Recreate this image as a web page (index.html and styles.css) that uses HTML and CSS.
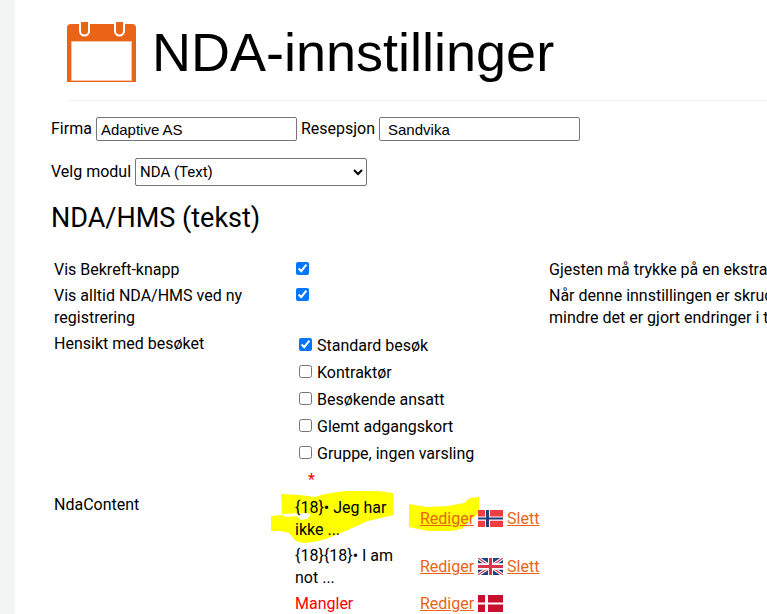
FILE: index.html
```html
<!DOCTYPE html>
<html lang="no">
  <head>
    <meta charset="utf-8"/>
    <meta name="viewport" content="width=device-width, initial-scale=1"/>
    <title>NDA-innstillinger</title>
    <link rel="stylesheet" href="styles.css">
  </head>
  <body>
    <main class="page">
      <header class="page__header">
        <svg class="page__icon" viewBox="0 0 69 60" aria-hidden="true">
          <path fill="#ea6418" d="M0 60V6q0-4 4-4h61q4 0 4 4v54z"/>
          <path fill="#fff" stroke="#f8c4a5" d="M4.500 19.500h60v39h-60z"/>
          <path fill="#fff" d="M12 0h11v9a5.500 5.500 0 0 1-11 0zM47 0h11v9a5.500 5.500 0 0 1-11 0z"/>
          <path fill="#ea6418" d="M14 0h7v9a3.500 3.500 0 0 1-7 0zM49 0h7v9a3.500 3.500 0 0 1-7 0z"/>
        </svg>
        <h1 class="page__title">NDA-innstillinger</h1>
      </header>

      <div class="filters">
        <label for="company">Firma</label>
        <input class="filters__input" type="text" id="company" value="Adaptive AS">
        <label for="reception">Resepsjon</label>
        <input class="filters__input filters__input--indent" type="text" id="reception" value="Sandvika">
      </div>
      <div class="filters">
        <label for="module">Velg modul</label>
        <select class="filters__select" id="module">
          <option>NDA (Text)</option>
        </select>
      </div>

      <h2 class="section-title">NDA/HMS (tekst)</h2>

      <table class="settings">
        <tr>
          <td class="settings__name"><label for="confirm">Vis Bekreft-knapp</label></td>
          <td class="settings__value"><input class="check" type="checkbox" id="confirm" checked></td>
          <td class="settings__help">Gjesten må trykke på en ekstra</td>
        </tr>
        <tr>
          <td><label for="always">Vis alltid NDA/HMS ved ny registrering</label></td>
          <td><input class="check" type="checkbox" id="always" checked></td>
          <td class="settings__help">Når denne innstillingen er skrud<br>mindre det er gjort endringer i t</td>
        </tr>
        <tr>
          <td>Hensikt med besøket</td>
          <td>
            <div class="purposes">
              <label class="purposes__item"><input class="check" type="checkbox" checked>Standard besøk</label>
              <label class="purposes__item"><input class="check" type="checkbox">Kontraktør</label>
              <label class="purposes__item"><input class="check" type="checkbox">Besøkende ansatt</label>
              <label class="purposes__item"><input class="check" type="checkbox">Glemt adgangskort</label>
              <label class="purposes__item"><input class="check" type="checkbox">Gruppe, ingen varsling</label>
              <span class="purposes__required">*</span>
            </div>
          </td>
          <td></td>
        </tr>
        <tr>
          <td>NdaContent</td>
          <td class="settings__content">
            <!-- yellow marker strokes behind the first row -->
            <svg class="marker" width="210" height="56" viewBox="0 0 210 56" aria-hidden="true">
              <path fill="#ff0" d="M10 1l19 1 15 2 10-3 20-3h33l15 2 1 22-26 6-18 8-14 6-10 4-12 3-11 1-7-2-7-8-8-2H0V23l11-1 4 2 11-1 4 4 6-1 4-4-4-2-25 1z"/>
              <path fill="#ff0" d="M138 11l18 3 21-1 16-3 6-5 9-1v16l-11 9-6 7-12 2h-22l-19-4z"/>
            </svg>
            <table class="languages">
              <tr>
                <td class="languages__text">{18}• Jeg har ikke ...</td>
                <td class="languages__actions">
                  <a href="#">Rediger</a>
                  <svg class="flag" viewBox="0 0 25 16" preserveAspectRatio="none" role="img" aria-label="Norsk">
                    <path fill="#ef3e42" d="M0 0h25v16H0z"/>
                    <path fill="#fff" d="M7 0h5v16H7zM0 6h25v4H0z"/>
                    <path fill="#1f3f77" d="M8 0h3v16H8zM0 7h25v2H0z"/>
                  </svg>
                  <a href="#">Slett</a>
                </td>
              </tr>
              <tr>
                <td class="languages__text">{18}{18}• I am not ...</td>
                <td class="languages__actions">
                  <a href="#">Rediger</a>
                  <svg class="flag" viewBox="0 0 25 16" preserveAspectRatio="none" role="img" aria-label="English">
                    <path fill="#26417f" d="M0 0h25v16H0z"/>
                    <path stroke="#fff" stroke-width="3" d="M0 0l25 16M25 0L0 16"/>
                    <path stroke="#d8354c" d="M0 0l25 16M25 0L0 16"/>
                    <path fill="#fff" d="M10 0h5v16h-5zM0 5h25v6H0z"/>
                    <path fill="#d8354c" d="M11 0h3v16h-3zM0 6.500h25v3H0z"/>
                  </svg>
                  <a href="#">Slett</a>
                </td>
              </tr>
              <tr>
                <td class="languages__text languages__text--missing">Mangler</td>
                <td class="languages__actions">
                  <a href="#">Rediger</a>
                  <svg class="flag" viewBox="0 0 25 18" preserveAspectRatio="none" role="img" aria-label="Dansk">
                    <path fill="#c8102e" d="M0 0h25v18H0z"/>
                    <path fill="#fff" d="M7 0h3v18H7zM0 8h25v2H0z"/>
                  </svg>
                </td>
              </tr>
            </table>
          </td>
          <td></td>
        </tr>
      </table>
    </main>
  </body>
</html>
```

FILE: styles.css
```css
body {
  margin: 0;
  background: #f3f5f4;
  color: #000;
  font-family: Roboto, sans-serif;
  font-size: 16px;
  line-height: 22px;
}

.page {
  min-height: 100vh;
  margin-left: 15px;
  padding-left: 36px;
  background: #fff;
  box-sizing: border-box;
  overflow: hidden;
}

.page__header {
  display: flex;
  align-items: center;
  height: 100px;
  margin-left: 16px;
  border-bottom: 1px solid #f2f2f2;
}

.page__icon {
  width: 69px;
  height: 60px;
  margin-top: 4px;
}

.page__title {
  margin: 4px 0 0 16px;
  font-family: "Liberation Sans", Arial, sans-serif;
  font-size: 54px;
  font-weight: 400;
  line-height: 60px;
}

.filters {
  display: flex;
  align-items: center;
  gap: 4px;
  margin-top: 16px;
}

.filters__input,
.filters__select {
  box-sizing: border-box;
  border: 1px solid #767676;
  border-radius: 2px;
  background: #fff;
  color: #000;
}

.filters__input {
  width: 201px;
  height: 24px;
  padding: 1px 4px;
  font-family: "Liberation Sans", Arial, sans-serif;
  font-size: 15px;
}

.filters__input--indent {
  padding-left: 8px;
}

.filters__select {
  width: 232px;
  height: 28px;
  font-family: Roboto, sans-serif;
  font-size: 15px;
}

.filters + .filters {
  margin-top: 17px;
}

.section-title {
  margin: 16px 0 22px;
  font-size: 27px;
  font-weight: 400;
  line-height: 32px;
}

.settings,
.languages {
  border-spacing: 2px;
}

.settings {
  width: 100%;
  table-layout: fixed;
}

.settings td {
  padding: 1px;
  vertical-align: top;
}

.settings__name {
  width: 237px;
}

.settings__value {
  width: 250px;
}

.settings__help {
  white-space: nowrap;
}

.check {
  width: 13px;
  height: 13px;
  margin: 3px 3px 4px;
  accent-color: #0075ff;
}

td > .check {
  margin-left: 1px;
}

.purposes {
  display: flex;
  flex-direction: column;
  gap: 5px;
  padding: 2px 0 0 1px;
}

.purposes__item {
  display: flex;
  column-gap: 2px;
}

.purposes__required {
  padding-left: 12px;
  color: #f00;
  line-height: 20px;
}

.settings__content {
  position: relative;
  isolation: isolate;
}

.marker {
  position: absolute;
  z-index: -1;
  top: 0;
  left: -23px;
  overflow: visible;
}

.languages {
  margin-left: -3px;
}

.settings .languages__actions {
  vertical-align: middle;
  white-space: nowrap;
}

.languages__text {
  width: 121px;
}

.languages__text--missing {
  color: #f00;
}

.languages a {
  color: #ea6418;
}

.flag {
  width: 25px;
  height: 17px;
  vertical-align: -3px;
}
```
